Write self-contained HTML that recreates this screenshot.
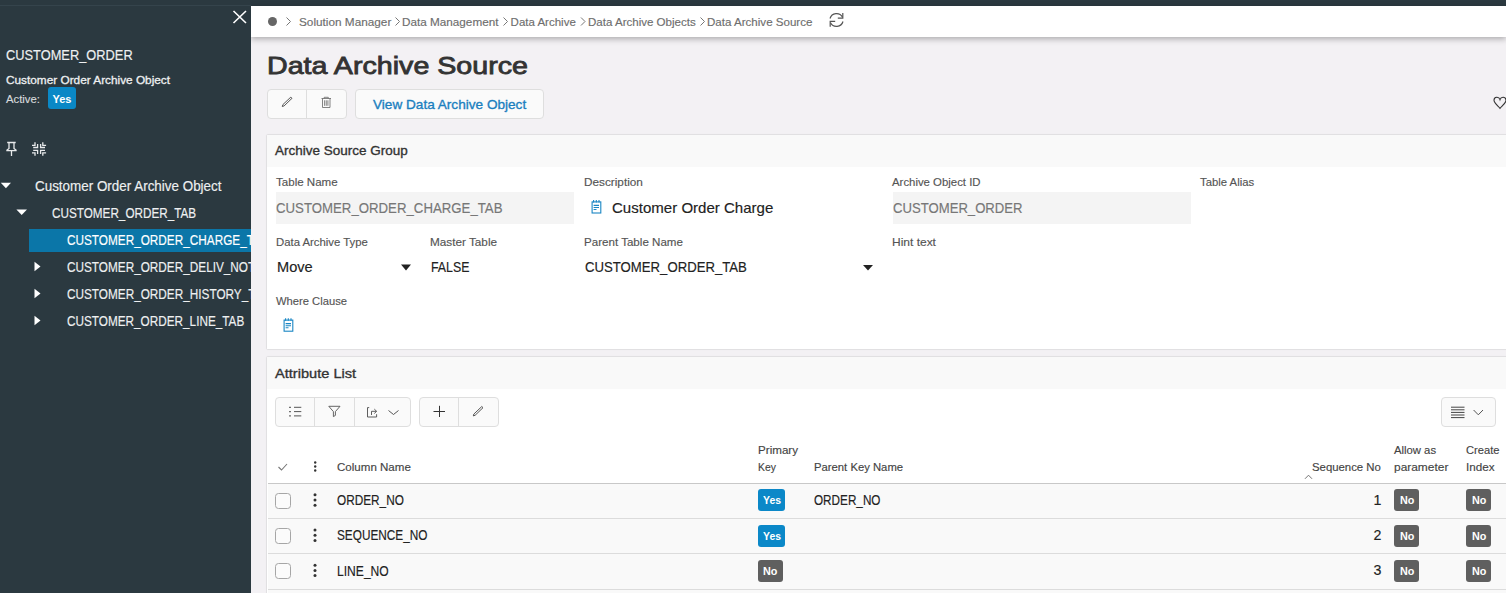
<!DOCTYPE html>
<html><head><meta charset="utf-8">
<style>
*{margin:0;padding:0;box-sizing:border-box}
html,body{width:1506px;height:593px;overflow:hidden}
body{position:relative;background:#f3f1f4;font-family:"Liberation Sans",sans-serif;color:#333}
.a{position:absolute;white-space:nowrap;line-height:1;transform-origin:0 0}
.r{position:absolute}
svg{position:absolute;overflow:visible}
#left{position:absolute;left:0;top:0;width:251px;height:593px;background:#2b3940;overflow:hidden}
</style></head>
<body>
<!-- top dark bar + breadcrumb bar -->
<div class="r" style="left:251px;top:0;width:1255px;height:6px;background:#2b3940"></div>
<div class="r" style="left:251px;top:6px;width:1255px;height:31px;background:#fff;box-shadow:0 2px 6px rgba(0,0,0,.3)"></div>
<div class="r" style="left:267.7px;top:16.8px;width:9.6px;height:9.6px;border-radius:50%;background:#666"></div>
<svg style="left:0;top:0" width="1506" height="40">
  <g fill="none" stroke="#777" stroke-width="1">
    <path d="M286.5 17.5 L290.5 21.5 L286.5 25.5"/>
    <path d="M395.5 17.5 L399.5 21.5 L395.5 25.5"/>
    <path d="M503.5 17.5 L507.5 21.5 L503.5 25.5"/>
    <path d="M581 17.5 L585 21.5 L581 25.5"/>
    <path d="M700.5 17.5 L704.5 21.5 L700.5 25.5"/>
  </g>
  <g fill="none" stroke="#555" stroke-width="1.2">
    <path d="M830 18.5 A6.8 6.8 0 0 1 842.5 17.2"/>
    <path d="M842.8 13 V18.2 H837.8"/>
    <path d="M843 21.5 A6.8 6.8 0 0 1 830.5 22.8"/>
    <path d="M830.2 26.8 V21.3 H835.2"/>
  </g>
</svg>

<!-- page action buttons -->
<div class="r" style="left:267px;top:89px;width:79.5px;height:30px;background:#fafafa;border:1px solid #dedede;border-radius:4px"></div>
<div class="r" style="left:306px;top:90px;width:1px;height:28px;background:#dedede"></div>
<div class="r" style="left:355px;top:89px;width:189px;height:30px;background:#fafafa;border:1px solid #dedede;border-radius:4px"></div>
<svg style="left:0;top:0" width="1506" height="130">
  <g fill="none" stroke="#555" stroke-width="1.2">
    <path d="M282.3 106.5 L282.9 104.6 L290.8 97.1 L292 98.3 L284.1 105.9 Z" stroke-width="0.85" stroke="#3a3a3a"/>
    <path d="M321.5 98.5 H331 M324.2 98.5 V97.3 H328.3 V98.5 M322.5 98.5 V107.5 H330 V98.5 M324.6 100.3 V105.8 M326.25 100.3 V105.8 M327.9 100.3 V105.8" stroke-width="0.8" stroke="#666"/>
    <path d="M1494 100.3 C1494 96.5 1499 96.3 1500 99.6 C1501 96.3 1506 96.5 1506 100.3 C1506 103 1502 106 1500 108.3 C1498 106 1494 103 1494 100.3 Z" stroke="#333" stroke-width="1.1"/>
  </g>
</svg>

<!-- card 1 -->
<div class="r" style="left:267px;top:135px;width:1245px;height:214px;background:#fff;box-shadow:0 0 1.5px rgba(0,0,0,.28)"></div>
<div class="r" style="left:267px;top:135px;width:1239px;height:31.5px;background:#f9f9f9"></div>
<div class="r" style="left:276px;top:192px;width:298px;height:32px;background:#f4f4f4"></div>
<div class="r" style="left:892.5px;top:191.5px;width:298.5px;height:32.5px;background:#f4f4f4"></div>
<svg style="left:0;top:0" width="1506" height="360">
  <g fill="none" stroke="#1a86c4" stroke-width="1.1">
    <rect x="592.1" y="201.9" width="8.7" height="11.1"/>
    <path d="M593.6 200 V202.6 M596.3 200 V202.6 M599 200 V202.6 M593.6 205.4 H599 M593.6 207.5 H599 M593.6 209.5 H596.5"/>
    <rect x="284.1" y="320.1" width="8.7" height="11.1"/>
    <path d="M285.6 318.2 V320.8 M288.3 318.2 V320.8 M291 318.2 V320.8 M285.6 323.6 H291 M285.6 325.7 H291 M285.6 327.7 H288.5"/>
  </g>
  <g fill="#222">
    <path d="M401 264.5 H411 L406 270.5 Z"/>
    <path d="M863 265 H873 L868 270.5 Z"/>
  </g>
</svg>

<!-- card 2 -->
<div class="r" style="left:267px;top:357px;width:1245px;height:245px;background:#fff;box-shadow:0 0 1.5px rgba(0,0,0,.28)"></div>
<div class="r" style="left:267px;top:357px;width:1239px;height:32px;background:#f9f9f9"></div>
<div class="r" style="left:275px;top:397px;width:136px;height:30px;background:#fafafa;border:1px solid #dedede;border-radius:4px"></div>
<div class="r" style="left:314px;top:398px;width:1px;height:28.5px;background:#dedede"></div>
<div class="r" style="left:354px;top:398px;width:1px;height:28.5px;background:#dedede"></div>
<div class="r" style="left:419px;top:397px;width:79.5px;height:30px;background:#fafafa;border:1px solid #dedede;border-radius:4px"></div>
<div class="r" style="left:458px;top:398px;width:1px;height:28.5px;background:#dedede"></div>
<div class="r" style="left:1440.5px;top:397px;width:55.5px;height:30px;background:#fafafa;border:1px solid #dedede;border-radius:4px"></div>
<!-- table rows -->
<div class="r" style="left:268px;top:484px;width:1238px;height:109px;background:#f9f9f9"></div>
<div class="r" style="left:268px;top:483px;width:1238px;height:1px;background:#c8c8c8"></div>
<div class="r" style="left:268px;top:518px;width:1238px;height:1px;background:#dcdcdc"></div>
<div class="r" style="left:268px;top:553px;width:1238px;height:1px;background:#dcdcdc"></div>
<div class="r" style="left:268px;top:588.5px;width:1238px;height:1px;background:#dcdcdc"></div>
<div class="r" style="left:274.8px;top:493px;width:16px;height:16px;border:1px solid #a6a6a6;border-radius:3.5px;background:#fbfbfb"></div>
<div class="r" style="left:274.8px;top:528px;width:16px;height:16px;border:1px solid #a6a6a6;border-radius:3.5px;background:#fbfbfb"></div>
<div class="r" style="left:274.8px;top:563px;width:16px;height:16px;border:1px solid #a6a6a6;border-radius:3.5px;background:#fbfbfb"></div>
<svg style="left:0;top:0" width="1506" height="593">
  <g fill="none" stroke="#555" stroke-width="1.1">
    <path d="M294 407.3 H301.3 M294 411.6 H301.3 M294 415.9 H301.3" stroke-width="1"/>
    <path d="M289.3 406.7 h1.4 v1.3 h-1.4 Z M289.3 411 h1.4 v1.3 h-1.4 Z M289.3 415.3 h1.4 v1.3 h-1.4 Z" fill="#333" stroke="none"/>
    <path d="M328.8 406.3 H340 L335.4 411.6 V415.4 L333.4 416.6 V411.6 Z" stroke-width="0.9"/>
    <path d="M369.2 407.6 H367.5 V417 H376.6 V414.2 M371.5 415 V411.3 H376.5 M374.3 409.1 L376.6 411.3 L374.3 413.5" stroke-width="0.95"/>
    <path d="M388.5 410.5 L393.5 414.5 L398.5 410.5" stroke-width="1"/>
    <path d="M433.5 411.5 H445 M439.5 405.8 V417" stroke-width="1" stroke="#333"/>
    <path d="M473.3 415.9 L473.9 414 L481.8 406.5 L483 407.7 L475.1 415.3 Z" stroke-width="0.85" stroke="#3a3a3a"/>
    <path d="M1451 407.2 H1464.5 M1451 409.8 H1464.5 M1451 412.4 H1464.5 M1451 415 H1464.5 M1451 417.6 H1464.5" stroke-width="1" stroke="#444"/>
    <path d="M1473.6 410 L1478.3 414.8 L1483 410" stroke-width="1"/>
    <path d="M278.5 467 L281.5 470 L287 464" stroke="#777"/>
    <path d="M1305 478.8 L1308.5 475.2 L1312 478.8" stroke="#666" stroke-width="0.9"/>
  </g>
  <g fill="#333">
    <circle cx="315.2" cy="462.5" r="1.2"/><circle cx="315.2" cy="466.5" r="1.2"/><circle cx="315.2" cy="470.5" r="1.2"/>
    <circle cx="315" cy="494.8" r="1.5"/><circle cx="315" cy="500.0" r="1.5"/><circle cx="315" cy="505.2" r="1.5"/>
    <circle cx="315" cy="530.0" r="1.5"/><circle cx="315" cy="535.2" r="1.5"/><circle cx="315" cy="540.4" r="1.5"/>
    <circle cx="315" cy="565.2" r="1.5"/><circle cx="315" cy="570.4" r="1.5"/><circle cx="315" cy="575.6" r="1.5"/>
    </g>
</svg>
<!-- badges -->
<div class="r" style="left:758px;top:489px;width:27px;height:22px;border-radius:3px;background:#0b88c8"></div>
<div class="r" style="left:758px;top:525px;width:27px;height:22px;border-radius:3px;background:#0b88c8"></div>
<div class="r" style="left:758px;top:560px;width:25px;height:22px;border-radius:3px;background:#5f5f5f"></div>
<div class="r" style="left:1394px;top:489px;width:25px;height:22px;border-radius:3px;background:#5f5f5f"></div>
<div class="r" style="left:1394px;top:525px;width:25px;height:22px;border-radius:3px;background:#5f5f5f"></div>
<div class="r" style="left:1394px;top:560px;width:25px;height:22px;border-radius:3px;background:#5f5f5f"></div>
<div class="r" style="left:1466px;top:489px;width:25px;height:22px;border-radius:3px;background:#5f5f5f"></div>
<div class="r" style="left:1466px;top:525px;width:25px;height:22px;border-radius:3px;background:#5f5f5f"></div>
<div class="r" style="left:1466px;top:560px;width:25px;height:22px;border-radius:3px;background:#5f5f5f"></div>

<div id="left">
  <div class="r" style="left:0;top:5px;width:251px;height:1px;background:#35444c"></div>
  <svg style="left:0;top:0" width="251" height="593">
    <g stroke="#fff" stroke-width="1.6" fill="none">
      <path d="M233.5 11 L246 23 M246 11 L233.5 23"/>
    </g>
    <g stroke="#e8eaeb" stroke-width="1.3" fill="none">
      <path d="M7.2 142.5 H15.7 M9 143 V148.5 L6.5 150.6 M14 143 V148.5 L16.5 150.6 M6.3 150.7 H16.6 M11.5 151 V156"/>
      <path d="M35 142.3 V145.4 H32 M37.6 143.9 V147.5 H33.2 M42.8 142.3 V145.4 H46.1 M40.6 143.9 V147.5 H45 M35 155.8 V152.8 H32 M37.6 154 V150.4 H33.2 M42.8 155.8 V152.8 H46.1 M40.6 154 V150.4 H45"/>
    </g>
    <g fill="#fff">
      <path d="M0.8 182.8 H11 L5.9 188.3 Z"/>
      <path d="M16.4 209.4 H27 L21.7 215.1 Z"/>
      <path d="M34.5 261.7 L40.5 266.5 L34.5 271.3 Z"/>
      <path d="M34.5 288.7 L40.5 293.5 L34.5 298.3 Z"/>
      <path d="M34.5 315.7 L40.5 320.5 L34.5 325.3 Z"/>
    </g>
  </svg>
  <div class="r" style="left:48px;top:87px;width:28px;height:21.5px;border-radius:3px;background:#0a88c6"></div>
  <div class="r" style="left:29px;top:229px;width:222px;height:23px;background:#0b76a8"></div>
<div class="a" style="left:6.3px;top:47.98px;font-size:14.2px;color:#eef0f1;-webkit-text-stroke:0.15px #eef0f1;transform:scaleX(0.9044);">CUSTOMER_ORDER</div>
<div class="a" style="left:6.0px;top:74.57px;font-size:11.5px;color:#eef0f1;-webkit-text-stroke:0.30px #eef0f1;transform:scaleX(1.0267);">Customer Order Archive Object</div>
<div class="a" style="left:6.0px;top:94.19px;font-size:11.0px;color:#d6dadc;-webkit-text-stroke:0.15px #d6dadc;transform:scaleX(1.0253);">Active:</div>
<div class="a" style="left:52.5px;top:93.89px;font-size:11.0px;font-weight:bold;color:#fff;">Yes</div>
<div class="a" style="left:35.4px;top:178.55px;font-size:14.0px;color:#eef0f1;-webkit-text-stroke:0.15px #eef0f1;transform:scaleX(0.9589);">Customer Order Archive Object</div>
<div class="a" style="left:51.6px;top:205.85px;font-size:14.0px;color:#eef0f1;-webkit-text-stroke:0.15px #eef0f1;transform:scaleX(0.8374);">CUSTOMER_ORDER_TAB</div>
<div class="a" style="left:67.3px;top:233.15px;font-size:14.0px;color:#fff;-webkit-text-stroke:0.15px #fff;transform:scaleX(0.8410);">CUSTOMER_ORDER_CHARGE_TAB</div>
<div class="a" style="left:67.3px;top:260.15px;font-size:14.0px;color:#eef0f1;-webkit-text-stroke:0.15px #eef0f1;transform:scaleX(0.8410);">CUSTOMER_ORDER_DELIV_NOTE_TAB</div>
<div class="a" style="left:67.3px;top:287.15px;font-size:14.0px;color:#eef0f1;-webkit-text-stroke:0.15px #eef0f1;transform:scaleX(0.8410);">CUSTOMER_ORDER_HISTORY_TAB</div>
<div class="a" style="left:67.2px;top:314.15px;font-size:14.0px;color:#eef0f1;-webkit-text-stroke:0.15px #eef0f1;transform:scaleX(0.8398);">CUSTOMER_ORDER_LINE_TAB</div>
</div>
<div class="a" style="left:298.5px;top:16.57px;font-size:11.5px;color:#6e6e6e;-webkit-text-stroke:0.15px #6e6e6e;transform:scaleX(1.0245);">Solution Manager</div>
<div class="a" style="left:402.2px;top:16.57px;font-size:11.5px;color:#6e6e6e;-webkit-text-stroke:0.15px #6e6e6e;transform:scaleX(1.0194);">Data Management</div>
<div class="a" style="left:510.6px;top:16.57px;font-size:11.5px;color:#6e6e6e;-webkit-text-stroke:0.15px #6e6e6e;">Data Archive</div>
<div class="a" style="left:587.6px;top:16.57px;font-size:11.5px;color:#6e6e6e;-webkit-text-stroke:0.15px #6e6e6e;transform:scaleX(1.0031);">Data Archive Objects</div>
<div class="a" style="left:706.7px;top:16.57px;font-size:11.5px;color:#6e6e6e;-webkit-text-stroke:0.15px #6e6e6e;transform:scaleX(1.0055);">Data Archive Source</div>
<div class="a" style="left:266.5px;top:54.01px;font-size:24.8px;color:#333;-webkit-text-stroke:0.64px #333;transform:scaleX(1.1545);-webkit-text-stroke:0.85px #333;">Data Archive Source</div>
<div class="a" style="left:372.5px;top:99.16px;font-size:12.8px;color:#1b7fbf;-webkit-text-stroke:0.33px #1b7fbf;transform:scaleX(1.0627);">View Data Archive Object</div>
<div class="a" style="left:275.2px;top:145.06px;font-size:12.8px;color:#333;-webkit-text-stroke:0.33px #333;transform:scaleX(1.0537);">Archive Source Group</div>
<div class="a" style="left:275.5px;top:176.57px;font-size:11.5px;color:#555;-webkit-text-stroke:0.15px #555;transform:scaleX(1.0047);">Table Name</div>
<div class="a" style="left:583.7px;top:176.57px;font-size:11.5px;color:#555;-webkit-text-stroke:0.15px #555;transform:scaleX(1.0230);">Description</div>
<div class="a" style="left:891.7px;top:176.57px;font-size:11.5px;color:#555;-webkit-text-stroke:0.15px #555;transform:scaleX(0.9897);">Archive Object ID</div>
<div class="a" style="left:1200.1px;top:176.57px;font-size:11.5px;color:#555;-webkit-text-stroke:0.15px #555;transform:scaleX(0.9845);">Table Alias</div>
<div class="a" style="left:276.0px;top:200.98px;font-size:14.2px;color:#777;-webkit-text-stroke:0.15px #777;transform:scaleX(0.9317);">CUSTOMER_ORDER_CHARGE_TAB</div>
<div class="a" style="left:611.5px;top:200.64px;font-size:14.6px;color:#222;-webkit-text-stroke:0.15px #222;transform:scaleX(1.0307);">Customer Order Charge</div>
<div class="a" style="left:893.1px;top:200.98px;font-size:14.2px;color:#777;-webkit-text-stroke:0.15px #777;transform:scaleX(0.9251);">CUSTOMER_ORDER</div>
<div class="a" style="left:275.5px;top:237.47px;font-size:11.5px;color:#555;-webkit-text-stroke:0.15px #555;transform:scaleX(0.9871);">Data Archive Type</div>
<div class="a" style="left:429.6px;top:237.47px;font-size:11.5px;color:#555;-webkit-text-stroke:0.15px #555;transform:scaleX(1.0215);">Master Table</div>
<div class="a" style="left:583.7px;top:237.47px;font-size:11.5px;color:#555;-webkit-text-stroke:0.15px #555;transform:scaleX(1.0072);">Parent Table Name</div>
<div class="a" style="left:891.7px;top:237.47px;font-size:11.5px;color:#555;-webkit-text-stroke:0.15px #555;transform:scaleX(1.0418);">Hint text</div>
<div class="a" style="left:276.6px;top:260.28px;font-size:14.2px;color:#222;-webkit-text-stroke:0.15px #222;transform:scaleX(1.0275);">Move</div>
<div class="a" style="left:430.7px;top:260.28px;font-size:14.2px;color:#222;-webkit-text-stroke:0.15px #222;transform:scaleX(0.8688);">FALSE</div>
<div class="a" style="left:585.2px;top:260.28px;font-size:14.2px;color:#222;-webkit-text-stroke:0.15px #222;transform:scaleX(0.9277);">CUSTOMER_ORDER_TAB</div>
<div class="a" style="left:275.5px;top:296.47px;font-size:11.5px;color:#555;-webkit-text-stroke:0.15px #555;transform:scaleX(0.9738);">Where Clause</div>
<div class="a" style="left:274.8px;top:367.96px;font-size:12.8px;color:#333;-webkit-text-stroke:0.33px #333;transform:scaleX(1.1405);">Attribute List</div>
<div class="a" style="left:337.4px;top:462.47px;font-size:11.5px;color:#444;-webkit-text-stroke:0.15px #444;transform:scaleX(1.0048);">Column Name</div>
<div class="a" style="left:757.8px;top:444.97px;font-size:11.5px;color:#444;-webkit-text-stroke:0.15px #444;transform:scaleX(1.0111);">Primary</div>
<div class="a" style="left:757.8px;top:462.47px;font-size:11.5px;color:#444;-webkit-text-stroke:0.15px #444;transform:scaleX(0.9015);">Key</div>
<div class="a" style="left:814.0px;top:462.47px;font-size:11.5px;color:#444;-webkit-text-stroke:0.15px #444;transform:scaleX(0.9811);">Parent Key Name</div>
<div class="a" style="left:1312.2px;top:462.47px;font-size:11.5px;color:#444;-webkit-text-stroke:0.15px #444;transform:scaleX(0.9880);">Sequence No</div>
<div class="a" style="left:1394.2px;top:444.97px;font-size:11.5px;color:#444;-webkit-text-stroke:0.15px #444;transform:scaleX(0.9820);">Allow as</div>
<div class="a" style="left:1394.2px;top:462.47px;font-size:11.5px;color:#444;-webkit-text-stroke:0.15px #444;transform:scaleX(1.0369);">parameter</div>
<div class="a" style="left:1466.3px;top:444.97px;font-size:11.5px;color:#444;-webkit-text-stroke:0.15px #444;transform:scaleX(0.9692);">Create</div>
<div class="a" style="left:1466.3px;top:462.47px;font-size:11.5px;color:#444;-webkit-text-stroke:0.15px #444;transform:scaleX(1.0148);">Index</div>
<div class="a" style="left:337.4px;top:493.18px;font-size:14.2px;color:#222;-webkit-text-stroke:0.15px #222;transform:scaleX(0.8317);">ORDER_NO</div>
<div class="a" style="left:814.0px;top:493.18px;font-size:14.2px;color:#222;-webkit-text-stroke:0.15px #222;transform:scaleX(0.8267);">ORDER_NO</div>
<div class="a" style="left:337.4px;top:528.38px;font-size:14.2px;color:#222;-webkit-text-stroke:0.15px #222;transform:scaleX(0.8316);">SEQUENCE_NO</div>
<div class="a" style="left:337.4px;top:563.58px;font-size:14.2px;color:#222;-webkit-text-stroke:0.15px #222;transform:scaleX(0.8527);">LINE_NO</div>
<div class="a" style="left:762.6px;top:494.59px;font-size:11.0px;font-weight:bold;color:#fff;transform:scaleX(0.9491);">Yes</div>
<div class="a" style="left:1399.6px;top:494.59px;font-size:11.0px;font-weight:bold;color:#fff;transform:scaleX(0.9821);">No</div>
<div class="a" style="left:1471.6px;top:494.59px;font-size:11.0px;font-weight:bold;color:#fff;transform:scaleX(0.9821);">No</div>
<div class="a" style="left:762.6px;top:530.79px;font-size:11.0px;font-weight:bold;color:#fff;transform:scaleX(0.9491);">Yes</div>
<div class="a" style="left:1399.6px;top:530.79px;font-size:11.0px;font-weight:bold;color:#fff;transform:scaleX(0.9821);">No</div>
<div class="a" style="left:1471.6px;top:530.79px;font-size:11.0px;font-weight:bold;color:#fff;transform:scaleX(0.9821);">No</div>
<div class="a" style="left:762.6px;top:565.79px;font-size:11.0px;font-weight:bold;color:#fff;transform:scaleX(0.9821);">No</div>
<div class="a" style="left:1399.6px;top:565.79px;font-size:11.0px;font-weight:bold;color:#fff;transform:scaleX(0.9821);">No</div>
<div class="a" style="left:1471.6px;top:565.79px;font-size:11.0px;font-weight:bold;color:#fff;transform:scaleX(0.9821);">No</div>
<div class="a" style="left:1381.3px;top:493.18px;font-size:14.2px;color:#222;-webkit-text-stroke:0.15px #222;transform:translateX(-100%);">1</div>
<div class="a" style="left:1381.3px;top:528.28px;font-size:14.2px;color:#222;-webkit-text-stroke:0.15px #222;transform:translateX(-100%);">2</div>
<div class="a" style="left:1381.3px;top:563.38px;font-size:14.2px;color:#222;-webkit-text-stroke:0.15px #222;transform:translateX(-100%);">3</div>
</body></html>
